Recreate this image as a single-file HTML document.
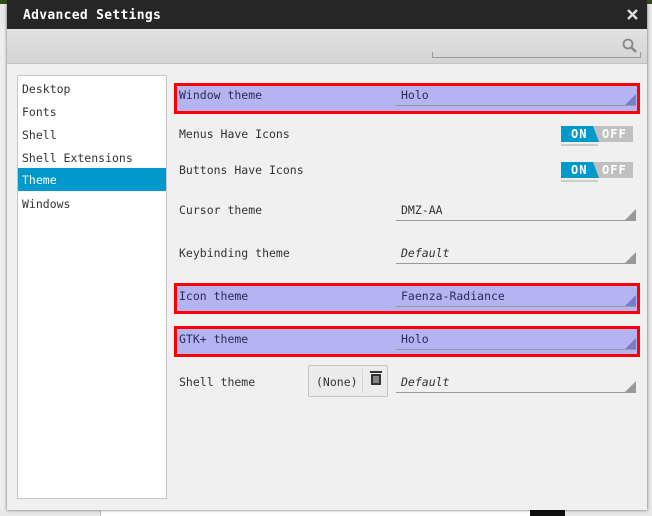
<!DOCTYPE html>
<html><head><meta charset="utf-8"><style>
*{margin:0;padding:0;box-sizing:border-box}
body{width:652px;height:516px;overflow:hidden;background:#e8e8e8;position:relative;font-family:"DejaVu Sans Mono","Liberation Mono",monospace;font-size:11.5px;color:#333}
.abs{position:absolute}
.win{left:7px;top:4px;width:640px;height:506px;background:#f0f0f0;box-shadow:0 0 3px rgba(0,0,0,.6)}
.title{left:7px;top:0;width:640px;height:29px;background:#262626;color:#fff;font-weight:bold;font-size:13px;padding:8px 0 0 16px;letter-spacing:.3px}
.tool{left:7px;top:29px;width:640px;height:35px;background:linear-gradient(#e2e2e2,#d4d4d4);border-bottom:1px solid #c4c4c4}
.side{left:17px;top:75px;width:150px;height:424px;background:#fff;border:1px solid #c6c6c6}
.item{position:absolute;left:0;width:148px;height:23px;padding:6px 0 0 4px;color:#333}
.sel{background:#0099cc;color:#fff}
.lbl{position:absolute;left:179px;color:#333}
.hl{position:absolute;left:174px;width:466px;height:31px;border:3px solid #f00;background:#b4b4f2}
.dd{position:absolute;left:396px;width:240px;height:22px;border-bottom:1px solid #999}
.dd span{position:absolute;left:5px;top:4px}
.dd svg{position:absolute;right:0;bottom:0}
.hl .dd{border-bottom-color:#7a7ac8}
.tg{position:absolute;left:561px;width:72px;height:16px;background:#c0c0c0;font-weight:bold;font-size:12px;color:#fff;letter-spacing:1px}
.tg .on{position:absolute;left:0;top:0;width:38px;height:16px;background:#0099cc;clip-path:polygon(0 0,32px 0,38px 16px,0 16px)}
.tg b{position:absolute;top:1px}
.tg i{position:absolute;left:0;top:18px;width:37px;height:2px;background:#ccc}
</style></head><body>
<div class="abs" style="left:0;top:0;width:652px;height:4px;background:#2f4a14"></div>
<div class="abs" style="left:0;top:30px;width:7px;height:480px;background:#eee"></div>
<div class="abs" style="left:100px;top:508px;width:445px;height:8px;background:#fff;border-left:1px solid #bbb"></div>
<div class="abs" style="left:530px;top:509px;width:35px;height:7px;background:#111"></div>
<div class="abs win"></div>
<div class="abs title">Advanced Settings</div>
<svg class="abs" style="left:627px;top:9px" width="11" height="11"><path d="M1 1L10 10M10 1L1 10" stroke="#ddd" stroke-width="2.4"/></svg>
<div class="abs tool"></div>
<div class="abs" style="left:432px;top:52px;width:209px;height:6px;border:1px solid #999;border-top:none"></div>
<svg class="abs" style="left:622px;top:38px" width="16" height="16"><circle cx="6" cy="6" r="4.5" fill="none" stroke="#888" stroke-width="1.8"/><path d="M9.5 9.5L14 14" stroke="#888" stroke-width="2.5"/></svg>
<div class="abs side">
<div class="item" style="top:0px">Desktop</div>
<div class="item" style="top:23px">Fonts</div>
<div class="item" style="top:46px">Shell</div>
<div class="item" style="top:69px">Shell Extensions</div>
<div class="item sel" style="top:92px;padding-top:5px">Theme</div>
<div class="item" style="top:115px">Windows</div>
</div>

<div class="hl" style="top:83px"></div>
<div class="lbl" style="top:88px;color:#2a2a5a">Window theme</div>
<div class="dd" style="top:84px;width:240px"><span style="color:#2a2a5a">Holo</span><svg width="11" height="11"><path d="M11 0V11H0Z" fill="#7a7ac8"/></svg></div>

<div class="lbl" style="top:127px">Menus Have Icons</div>
<div class="tg" style="top:126px"><div class="on"></div><b style="left:10px">ON</b><b style="left:41px">OFF</b><i></i></div>
<div class="lbl" style="top:163px">Buttons Have Icons</div>
<div class="tg" style="top:162px"><div class="on"></div><b style="left:10px">ON</b><b style="left:41px">OFF</b><i></i></div>

<div class="lbl" style="top:203px">Cursor theme</div>
<div class="dd" style="top:199px"><span>DMZ-AA</span><svg width="11" height="11"><path d="M11 0V11H0Z" fill="#999"/></svg></div>
<div class="lbl" style="top:246px">Keybinding theme</div>
<div class="dd" style="top:242px"><span style="font-style:italic">Default</span><svg width="11" height="11"><path d="M11 0V11H0Z" fill="#999"/></svg></div>

<div class="hl" style="top:283px"></div>
<div class="lbl" style="top:289px;color:#2a2a5a">Icon theme</div>
<div class="dd" style="top:285px"><span style="color:#2a2a5a">Faenza-Radiance</span><svg width="11" height="11"><path d="M11 0V11H0Z" fill="#7a7ac8"/></svg></div>
<div class="hl" style="top:326px"></div>
<div class="lbl" style="top:332px;color:#2a2a5a">GTK+ theme</div>
<div class="dd" style="top:328px"><span style="color:#2a2a5a">Holo</span><svg width="11" height="11"><path d="M11 0V11H0Z" fill="#7a7ac8"/></svg></div>

<div class="lbl" style="top:375px">Shell theme</div>
<div class="abs" style="left:308px;top:365px;width:80px;height:32px;border:1px solid #c4c4c4;border-radius:2px;background:#ececec"></div>
<div class="abs" style="left:316px;top:375px">(None)</div>
<div class="abs" style="left:362px;top:369px;width:1px;height:24px;background:#d4d4d4"></div>
<svg class="abs" style="left:368px;top:370px" width="16" height="16"><rect x="2" y="1" width="12" height="2" fill="#333"/><rect x="3" y="4" width="10" height="11" fill="#333"/><rect x="5" y="6" width="6" height="7" fill="#888"/></svg>
<div class="dd" style="top:371px"><span style="font-style:italic">Default</span><svg width="11" height="11"><path d="M11 0V11H0Z" fill="#999"/></svg></div>
</body></html>
